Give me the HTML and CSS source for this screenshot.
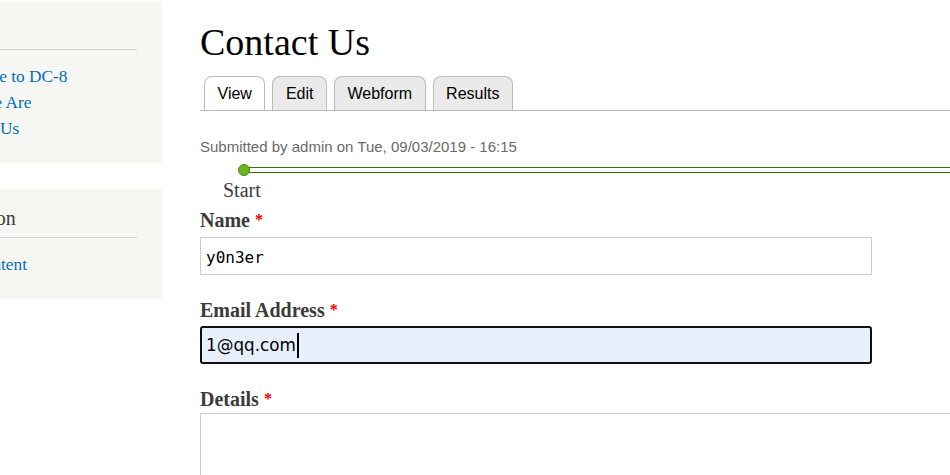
FILE: index.html
```html
<!DOCTYPE html>
<html lang="en">
<head>
<meta charset="utf-8">
<title>Contact Us</title>
<link rel="stylesheet" href="styles.css">
</head>
<body>
<div class="page">
  <aside class="sidebar">
    <section class="block">
      <h2 class="block-title">Main</h2>
      <ul class="menu">
        <li><a href="#">Welcome to DC-8</a></li>
        <li><a href="#">Who We Are</a></li>
        <li><a href="#">Contact Us</a></li>
      </ul>
    </section>
    <section class="block">
      <h2 class="block-title">Navigation</h2>
      <ul class="menu">
        <li><a href="#">Add content</a></li>
      </ul>
    </section>
  </aside>
  <main class="main">
    <h1 class="title">Contact Us</h1>
    <ul class="tabs">
      <li class="tab active">View</li>
      <li class="tab">Edit</li>
      <li class="tab">Webform</li>
      <li class="tab">Results</li>
    </ul>
    <div class="submitted">Submitted by admin on Tue, 09/03/2019 - 16:15</div>
    <div class="progress">
      <div class="track"></div>
      <span class="dot"></span>
    </div>
    <div class="progress-label">Start</div>
    <div class="field">
      <label class="label">Name <span class="req">*</span></label>
      <div class="input name-input">y0n3er</div>
    </div>
    <div class="field">
      <label class="label">Email Address <span class="req">*</span></label>
      <div class="input email-input">1@qq.com<span class="caret"></span></div>
    </div>
    <div class="field details">
      <label class="label">Details <span class="req">*</span></label>
      <div class="textarea"></div>
    </div>
  </main>
</div>
</body>
</html>
```
FILE: styles.css
```css
html, body {
  margin: 0;
  padding: 0;
  background: #fff;
  overflow: hidden;
  height: 475px;
}
body {
  font-family: "Liberation Serif", serif;
  color: #3b3b3b;
}
.page {
  display: flex;
  align-items: flex-start;
  margin-left: -89px;
}
.sidebar {
  flex: 0 0 251px;
  width: 251px;
  margin-top: 1px;
}
.block {
  background: #f6f6f2;
  padding: 17px 25px 21px 16px;
  margin-bottom: 26px;
}
.block-title {
  margin: 0;
  font-size: 20px;
  font-weight: normal;
  line-height: 24px;
  color: #3b3b3b;
  padding-bottom: 7px;
  border-bottom: 1px solid #d6d6d6;
  white-space: nowrap;
}
.menu {
  list-style: none;
  margin: 14px 0 0;
  padding: 0 0 0 15px;
}
.menu li {
  font-size: 17.3px;
  line-height: 26px;
  white-space: nowrap;
}
.menu a {
  color: #0071b3;
  text-decoration: none;
}
.main {
  flex: 0 0 900px;
  padding-left: 38px;
}
.title {
  margin: 23px 0 0;
  font-size: 38px;
  line-height: 38px;
  font-weight: normal;
  color: #000;
}
.tabs {
  list-style: none;
  display: flex;
  gap: 7px;
  margin: 15px 0 0;
  padding: 0 0 0 4px;
  border-bottom: 1px solid #bbb;
}
.tab {
  font-family: "Liberation Sans", Arial, sans-serif;
  font-size: 16px;
  line-height: 33px;
  padding: 0 12.5px;
  color: #000;
  background: #eaeaea;
  border: 1px solid #bbb;
  border-bottom: none;
  border-radius: 8px 8px 0 0;
}
.tab.active {
  background: #fff;
}
.submitted {
  margin-top: 26px;
  font-family: "Liberation Sans", Arial, sans-serif;
  font-size: 15px;
  line-height: 20px;
  color: #68696b;
}
.progress {
  position: relative;
  margin-top: 10px;
  height: 6px;
}
.track {
  margin-left: 43px;
  height: 4px;
  border-top: 1px solid #3b7000;
  border-bottom: 1px solid #3b7000;
}
.dot {
  position: absolute;
  left: 38px;
  top: -3px;
  width: 10px;
  height: 10px;
  border-radius: 50%;
  background: #6cb521;
  border: 1px solid #4c8a10;
}
.progress-label {
  margin: 5px 0 0 23px;
  font-size: 20px;
  line-height: 24px;
  color: #3b3b3b;
}
.field {
  margin-top: 6px;
}
.field + .field {
  margin-top: 23px;
}
.label {
  display: block;
  font-size: 20px;
  line-height: 24px;
  font-weight: bold;
  color: #3b3b3b;
}
.req {
  color: #e00;
  font-size: 16px;
  vertical-align: top;
}
.input {
  box-sizing: border-box;
  width: 672px;
  height: 38px;
  margin-top: 5px;
  display: flex;
  align-items: center;
  color: #000;
}
.name-input {
  border: 1px solid #ccc;
  padding: 2px 5px 0;
  font-family: "DejaVu Sans Mono", monospace;
  font-size: 16px;
}
.email-input {
  margin-top: 4px;
  border: 2px solid #111;
  border-radius: 3px;
  background: #e8f0fe;
  padding: 0 4px;
  font-family: "DejaVu Sans", sans-serif;
  font-size: 16.8px;
}
.caret {
  display: inline-block;
  width: 2px;
  height: 25px;
  background: #000;
  margin-left: 1px;
}
.details .textarea {
  box-sizing: border-box;
  width: 800px;
  height: 120px;
  margin-top: 2px;
  border: 1px solid #ccc;
}
```
